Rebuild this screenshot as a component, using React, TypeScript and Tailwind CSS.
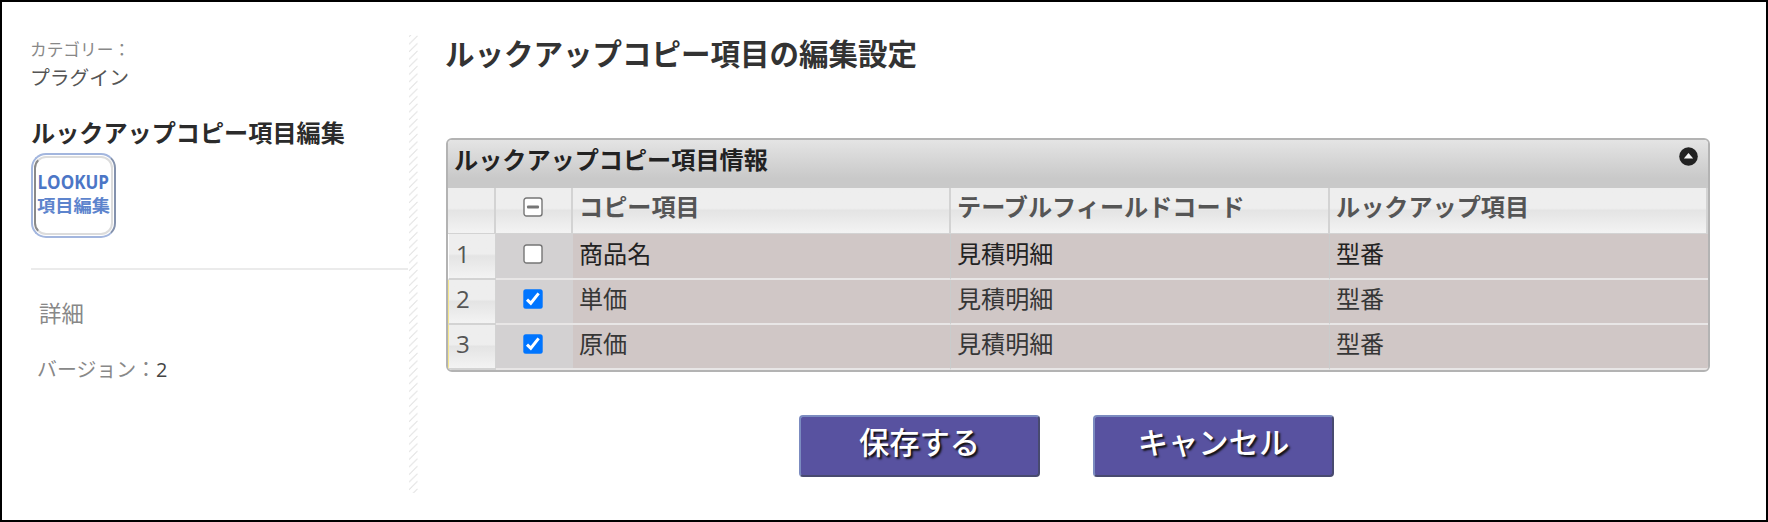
import React from "react";

type Row = { name: string; table: string; lookup: string; checked: boolean };

const rows: Row[] = [
  { name: "商品名", table: "見積明細", lookup: "型番", checked: false },
  { name: "単価", table: "見積明細", lookup: "型番", checked: true },
  { name: "原価", table: "見積明細", lookup: "型番", checked: true },
];

const COLS = "grid grid-cols-[48px_77px_378px_379px_1fr]";

function Checkbox({ state }: { state: "on" | "off" | "mixed" }) {
  return (
    <svg className="block h-5 w-5" viewBox="0 0 20 20">
      {state === "on" ? (
        <>
          <rect x="0.3" y="0.3" width="19.4" height="19.4" rx="2.5" fill="#0075ff" />
          <path d="M4 10.6 L7.8 14.2 L15.6 4.4" fill="none" stroke="#fff" strokeWidth="3" />
        </>
      ) : (
        <rect x="1" y="1" width="18" height="18" rx="2.5" fill="#fff" stroke="#767676" strokeWidth="1.4" />
      )}
      {state === "mixed" && <rect x="4" y="8.4" width="12" height="3" rx="1" fill="#767676" />}
    </svg>
  );
}

function Hatch() {
  return (
    <svg className="mt-[35px] block h-[458px] w-[9px]">
      <defs>
        <pattern id="hatch" width="9" height="7.55" patternUnits="userSpaceOnUse">
          <path d="M0 9.3 L8.5 0.8 M0 1.75 L8.5 -6.75 M0 16.85 L8.5 8.35" stroke="#e2e2e2" strokeWidth="1" />
        </pattern>
      </defs>
      <rect width="9" height="458" fill="url(#hatch)" />
    </svg>
  );
}

function PluginIcon() {
  return (
    <div className="h-[85px] w-[85px] rounded-[15px] border-2 border-[#a3b6de] border-r-[#8492ad] p-[1px]">
      <div className="h-full w-full rounded-[12px] border-2 border-[#dcdcdc] border-l-[#8a8a8a] bg-white pt-[10px]">
        <svg className="-ml-[1px] block h-[48px] w-[77px] overflow-visible" viewBox="0 0 77 48">
          <text x="2.5" y="20.5" textLength="71.5" lengthAdjust="spacingAndGlyphs" fill="#4c76c6" className="font-['Open_Sans',sans-serif] text-[19px] font-bold">
            LOOKUP
          </text>
          <text x="2" y="43.5" textLength="73" lengthAdjust="spacingAndGlyphs" fill="#5d84cd" className="text-[17.5px] font-bold">
            項目編集
          </text>
        </svg>
      </div>
    </div>
  );
}

function ActionButton({ children }: { children: string }) {
  return (
    <button className="h-[62px] w-[241px] rounded-[4px] border-2 border-t-[#7b8bc0] border-r-[#484a70] border-b-[#484a70] border-l-[#7b8bc0] bg-[#5852a0] pb-[7px] text-[30.3px] leading-[51px] font-medium whitespace-nowrap text-white [text-shadow:2px_2px_2px_#111]">
      {children}
    </button>
  );
}

export default function App() {
  return (
    <div className="flex h-[522px] w-[1768px] overflow-hidden border-2 border-black bg-white font-['Open_Sans','Noto_Sans_CJK_JP',sans-serif] text-[#333]">
      <aside className="flex w-[407px] shrink-0 flex-col pr-px pl-[29px]">
        <div className="mt-[36px] -ml-px h-6 text-[16.7px] leading-6 text-[#888]">カテゴリー：</div>
        <div className="mt-[2px] -ml-px h-[28px] text-[19.8px] leading-[28px] text-[#555]">プラグイン</div>
        <h2 className="mt-[24px] h-[34px] text-[24.15px] leading-[34px] font-bold whitespace-nowrap text-[#2b2b2b]">
          ルックアップコピー項目編集
        </h2>
        <div className="mt-[3px]">
          <PluginIcon />
        </div>
        <div className="mt-[30px] h-[2px] bg-[#ebebeb]" />
        <h3 className="mt-[28px] h-8 pl-[8px] text-[22.4px] leading-8 text-[#888]">詳細</h3>
        <div className="mt-[25px] h-[30px] pl-[6px] text-[19.9px] leading-[30px] whitespace-nowrap text-[#888]">
          バージョン：<span className="text-[#444]">2</span>
        </div>
      </aside>

      <div className="-mt-[2px] w-[9px] shrink-0">
        <Hatch />
      </div>

      <main className="ml-[28px] w-[1264px]">
        <h1 className="mt-[32px] -ml-px h-10 text-[29.5px] leading-10 font-bold whitespace-nowrap text-[#333]">
          ルックアップコピー項目の編集設定
        </h1>

        <section className="mt-[64px] h-[234px] overflow-hidden rounded-[6px] border-2 border-[#b3b3b3]">
          <div className="flex h-[48px] justify-between bg-linear-to-b from-[#e4e4e4] to-[#c9c9c9] to-80% pr-[10px] pl-[6px]">
            <span className="text-[24.15px] leading-[40px] font-bold text-[#222]">ルックアップコピー項目情報</span>
            <svg className="mt-[7px] block h-[19px] w-[19px]" viewBox="0 0 19 19">
              <circle cx="9.5" cy="9.5" r="9.3" fill="#222" />
              <path d="M4.8 11.4 L9.5 6 L14.2 11.4 Z" fill="#f4f4f4" />
            </svg>
          </div>

          <div className={COLS + " h-[46px] border-b border-[#d3d3d3] bg-linear-to-b from-[#eeeeee] from-45% via-[#e4e4e4] via-50% to-[#f3f3f3] text-[24.15px] leading-[38px] font-bold text-[#555]"}>
            <div className="border-r-2 border-[#d3d3d3]" />
            <div className="border-r-2 border-[#d3d3d3] pt-[9px] pl-[27px]">
              <Checkbox state="mixed" />
            </div>
            <div className="border-r-2 border-[#d3d3d3] pl-[6px]">コピー項目</div>
            <div className="border-r-2 border-[#d3d3d3] pl-[6px]">テーブルフィールドコード</div>
            <div className="border-r-2 border-[#d3d3d3] pl-[6px]">ルックアップ項目</div>
          </div>

          {rows.map((row, i) => (
            <div
              key={i}
              className={
                COLS + " text-[24.1px] " + (row.checked ? "h-[45px] leading-[38px] text-[#363636]" : "h-[46px] leading-[40px] text-[#222]")
              }
            >
              <div
                className={
                  "border-r border-b-2 border-l border-r-[#d3d3d3] border-b-[#d3d3d3] bg-linear-to-b from-[#eeeeee] from-45% via-[#e4e4e4] via-50% to-[#f3f3f3] pl-[7px] text-[#555] " +
                  (row.checked ? "border-l-[#f5e68c]" : "border-l-white")
                }
              >
                {i + 1}
              </div>
              <div className={"border-b-2 border-[#e8e6e6] bg-[#d3d1d2] pl-[27px] " + (row.checked ? "pt-[9px]" : "pt-[10px]")}>
                <Checkbox state={row.checked ? "on" : "off"} />
              </div>
              <div className="border-r border-b-2 border-r-[#c9cccc] border-b-[#e8e6e6] bg-[#d0c7c6] pl-[6px]">{row.name}</div>
              <div className="border-r border-b-2 border-r-[#c9cccc] border-b-[#e8e6e6] bg-[#d0c7c6] pl-[6px]">{row.table}</div>
              <div className="border-b-2 border-[#e8e6e6] bg-[#d0c7c6] pl-[6px]">{row.lookup}</div>
            </div>
          ))}
        </section>

        <div className="mt-[43px] ml-[353px] flex gap-[53px]">
          <ActionButton>保存する</ActionButton>
          <ActionButton>キャンセル</ActionButton>
        </div>
      </main>
    </div>
  );
}
